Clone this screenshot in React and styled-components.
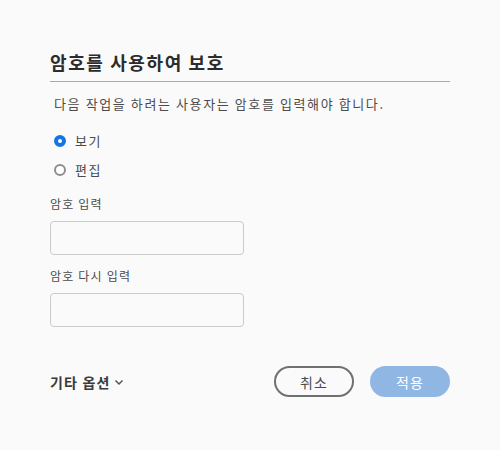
import React, { useState } from "react";
import styled, { createGlobalStyle } from "styled-components";

const GlobalStyle = createGlobalStyle`
	body {
		margin: 0;
		background: #fafafa;
		font-family: "Noto Sans CJK KR", "Noto Sans", sans-serif;
		color: #4b4b4b;
	}
`;

const Dialog = styled.div`
	width: 400px;
	padding: 49px 50px 0;
	display: flex;
	flex-direction: column;
`;

const Heading = styled.h2`
	margin: 0;
	padding-bottom: 6px;
	font-size: 18px;
	font-weight: 700;
	line-height: 26px;
	letter-spacing: 1.6px;
	color: #2c2c2c;
	border-bottom: 1px solid #a8a8a8;
`;

const Description = styled.p`
	margin: 12px 0 0 4px;
	font-size: 13px;
	line-height: 20px;
	letter-spacing: 1.6px;
	color: #4b4b4b;
`;

const RadioGroup = styled.div`
	margin-top: 17px;
	display: flex;
	flex-direction: column;
	gap: 9px;
`;

const RadioRow = styled.label`
	display: flex;
	align-items: center;
	gap: 9px;
	padding-left: 4px;
	font-size: 13px;
	line-height: 20px;
	letter-spacing: 1.5px;
	color: #4b4b4b;
	cursor: pointer;
`;

const RadioDot = styled.span`
	width: 12px;
	height: 12px;
	box-sizing: border-box;
	border-radius: 50%;
	border: ${props => (props.checked ? "4px solid #1473e6" : "2px solid #8e8e8e")};
	background: #fff;
`;

const FieldLabel = styled.div`
	margin-top: ${props => props.top}px;
	font-size: 12px;
	line-height: 18px;
	letter-spacing: 1.2px;
	color: #4b4b4b;
`;

const TextInput = styled.input`
	margin-top: 8px;
	width: 194px;
	height: 34px;
	box-sizing: border-box;
	border: 1px solid #cacaca;
	border-radius: 4px;
	background: #fafafa;
	outline: none;
`;

const Footer = styled.div`
	margin-top: 39px;
	display: flex;
	align-items: center;
	justify-content: space-between;
`;

const MoreOptions = styled.button`
	border: none;
	background: none;
	padding: 0;
	display: flex;
	align-items: center;
	gap: 3px;
	font-family: inherit;
	font-size: 14px;
	font-weight: 700;
	letter-spacing: 1.2px;
	color: #3a3a3a;
`;

const Actions = styled.div`
	display: flex;
	gap: 16px;
`;

const Button = styled.button`
	width: 80px;
	height: 31px;
	box-sizing: border-box;
	border-radius: 16px;
	font-family: inherit;
	font-size: 14px;
	letter-spacing: 1px;
	border: ${props => (props.primary ? "none" : "2px solid #707070")};
	background: ${props => (props.primary ? "#90b6e4" : "transparent")};
	color: ${props => (props.primary ? "#ffffff" : "#4b4b4b")};
`;

export default function App() {
	const [mode, setMode] = useState("view");

	return (
		<>
			<GlobalStyle />
			<Dialog>
				<Heading>암호를 사용하여 보호</Heading>
				<Description>다음 작업을 하려는 사용자는 암호를 입력해야 합니다.</Description>
				<RadioGroup>
					<RadioRow onClick={() => setMode("view")}>
						<RadioDot checked={mode === "view"} />
						보기
					</RadioRow>
					<RadioRow onClick={() => setMode("edit")}>
						<RadioDot checked={mode === "edit"} />
						편집
					</RadioRow>
				</RadioGroup>
				<FieldLabel top={15}>암호 입력</FieldLabel>
				<TextInput type="password" />
				<FieldLabel top={12}>암호 다시 입력</FieldLabel>
				<TextInput type="password" />
				<Footer>
					<MoreOptions>
						기타 옵션
						<svg width="10" height="10" viewBox="0 0 10 10">
							<path d="M1.5 3.5 L5 7 L8.5 3.5" fill="none" stroke="#555" strokeWidth="1.5" />
						</svg>
					</MoreOptions>
					<Actions>
						<Button>취소</Button>
						<Button primary>적용</Button>
					</Actions>
				</Footer>
			</Dialog>
		</>
	);
}
